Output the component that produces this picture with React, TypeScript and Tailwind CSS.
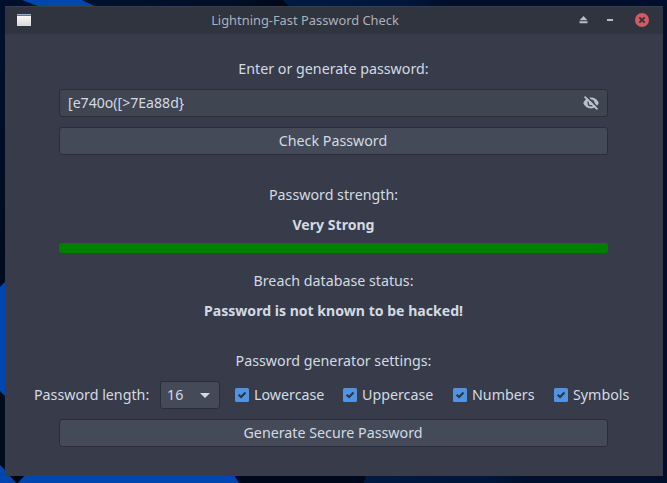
import type { ReactNode } from "react";

function Wallpaper() {
  return (
    <svg className="absolute inset-0" width="667" height="483" viewBox="0 0 667 483">
      <defs>
        <linearGradient id="edge" x1="0" y1="0" x2="0" y2="1">
          <stop offset="0" stopColor="#00102c" />
          <stop offset="1" stopColor="#000b1e" />
        </linearGradient>
        <linearGradient id="topShade" x1="0" y1="0" x2="1" y2="0">
          <stop offset="0" stopColor="#00112f" />
          <stop offset="0.7" stopColor="#00102a" />
          <stop offset="1" stopColor="#000615" />
        </linearGradient>
        <linearGradient id="navy" x1="0" y1="0" x2="1" y2="0">
          <stop offset="0" stopColor="#001a42" />
          <stop offset="0.75" stopColor="#00163a" />
          <stop offset="1" stopColor="#000f2a" />
        </linearGradient>
      </defs>
      <rect width="667" height="483" fill="#00102c" />
      <path d="M22 0H82L97 7H40Z" fill="#0046b0" />
      <path d="M82 0H283L290 7H97Z" fill="url(#topShade)" />
      <path d="M283 0H450V7H290Z" fill="url(#navy)" />
      <rect y="8" width="6" height="275" fill="url(#edge)" />
      <path d="M0 287L6 281V483H0Z" fill="#0046b0" />
      <path d="M0 391L6 397V471L0 465Z" fill="#000b1e" />
      <rect y="475" width="240" height="8" fill="#0046b0" />
      <path d="M9 475H25L17 484Z" fill="#00050d" />
      <path d="M234 475H368L364 483H239Z" fill="#00091b" />
      <path d="M366 475H530V483H364Z" fill="url(#navy)" />
    </svg>
  );
}

function Caption({ children, bold }: { children: ReactNode; bold?: boolean }) {
  return (
    <div className={`flex h-5 items-center justify-center ${bold ? "text-[14.08px] font-bold" : ""}`}>
      {children}
    </div>
  );
}

function Button({ children }: { children: ReactNode }) {
  return (
    <button className="flex h-7 w-[549px] items-center justify-center rounded-[3px] border border-[#2b2e39] bg-[#444a58] pr-px">
      {children}
    </button>
  );
}

function Check({ label, width }: { label: string; width: string }) {
  return (
    <label className={`flex items-center gap-[5px] ${width}`}>
      <svg width="14" height="14" viewBox="0 0 14 14" className="shrink-0">
        <rect width="14" height="14" rx="1.5" fill="#5294e2" />
        <path d="M3.6 6.7L6.1 9.1L10.5 4.6" fill="none" stroke="#2b3547" strokeWidth="2.1" />
      </svg>
      <span>{label}</span>
    </label>
  );
}

function HiddenEye() {
  return (
    <svg width="16" height="16" viewBox="0 0 16 16" className="shrink-0">
      <path d="M8 2.6C4.5 2.6 1.6 4.8 .3 8C1.6 11.2 4.5 13.4 8 13.4S14.4 11.2 15.7 8C14.4 4.8 11.5 2.6 8 2.6Z" fill="#bac1cd" />
      <circle cx="8" cy="8" r="2.9" fill="none" stroke="#404552" strokeWidth="1.3" />
      <path d="M2.9 .5L15.2 12.8" stroke="#404552" strokeWidth="1.6" />
      <path d="M1.6 1.6L14.4 14.4" stroke="#bac1cd" strokeWidth="1.9" />
    </svg>
  );
}

function TitleBar() {
  return (
    <header className="flex h-7 items-center border-t border-[#393e49] bg-[#2f343f] pb-px pl-3 pr-3.5 text-[12.86px] text-[#adb1bb]">
      <svg width="14" height="12" viewBox="0 0 14 12">
        <defs>
          <linearGradient id="paper" x1="0" y1="0" x2="0" y2="1">
            <stop offset="0" stopColor="#ffffff" />
            <stop offset="1" stopColor="#d8d8d6" />
          </linearGradient>
        </defs>
        <rect width="14" height="12" fill="url(#paper)" />
        <rect width="14" height="1" fill="#9aabc9" />
        <rect y="1" width="14" height="1" fill="#5b77a8" />
      </svg>
      <span className="flex-1 text-center">Lightning-Fast Password Check</span>
      <svg width="70" height="14" viewBox="0 0 70 14">
        <path d="M4.5 3L8.5 7.3H.5ZM.5 8.3H8.5V10.3H.5Z" fill="#b8bec9" />
        <rect x="28" y="6" width="6" height="2" fill="#b8bec9" />
        <circle cx="63" cy="7" r="7" fill="#d25b63" />
        <path d="M60.3 4.3L65.7 9.7M65.7 4.3L60.3 9.7" stroke="#2f343f" strokeWidth="1.9" />
      </svg>
    </header>
  );
}

export default function App() {
  return (
    <div className="relative h-[483px] w-[667px] overflow-hidden font-['Noto_Sans',sans-serif] text-[14.26px] leading-5 text-[#d3dae3]">
      <Wallpaper />
      <main className="relative ml-[5px] mt-1.5 flex h-[470px] w-[658px] flex-col">
        <TitleBar />
        <section className="flex flex-1 flex-col items-center bg-[#383c4a] pr-px pt-[25px]">
          <Caption>Enter or generate password:</Caption>
          <div className="mt-2.5 flex h-7 w-[549px] items-center justify-between rounded-[3px] border border-[#2b2e39] bg-[#404552] px-2">
            <span className="text-[14.1px]">{"[e740o([>7Ea88d}"}</span>
            <HiddenEye />
          </div>
          <div className="mt-2.5 flex"><Button>Check Password</Button></div>
          <div className="mt-[30px]"><Caption>Password strength:</Caption></div>
          <div className="mt-2.5"><Caption bold>Very Strong</Caption></div>
          <div className="mt-2 h-2.5 w-[549px] rounded-[3px] bg-[#008000]" />
          <div className="mt-[18px]"><Caption>Breach database status:</Caption></div>
          <div className="mt-2.5"><Caption bold>Password is not known to be hacked!</Caption></div>
          <div className="mt-[30px]"><Caption>Password generator settings:</Caption></div>
          <div className="mt-2.5 flex h-7 w-[599px] items-center">
            <span className="w-[126px]">Password length:</span>
            <div className="mr-[15px] flex h-7 w-[60px] items-center justify-between rounded-[3px] border border-[#2b2e39] bg-[#444a58] pl-1.5 pr-[9px]">
              <span>16</span>
              <svg width="10" height="5" viewBox="0 0 10 5"><path d="M0 0H10L5 5Z" fill="#d3dae3" /></svg>
            </div>
            <Check label="Lowercase" width="w-[108px]" />
            <Check label="Uppercase" width="w-[110px]" />
            <Check label="Numbers" width="w-[101px]" />
            <Check label="Symbols" width="w-[79px]" />
          </div>
          <div className="mt-2.5 flex"><Button>Generate Secure Password</Button></div>
        </section>
      </main>
    </div>
  );
}
